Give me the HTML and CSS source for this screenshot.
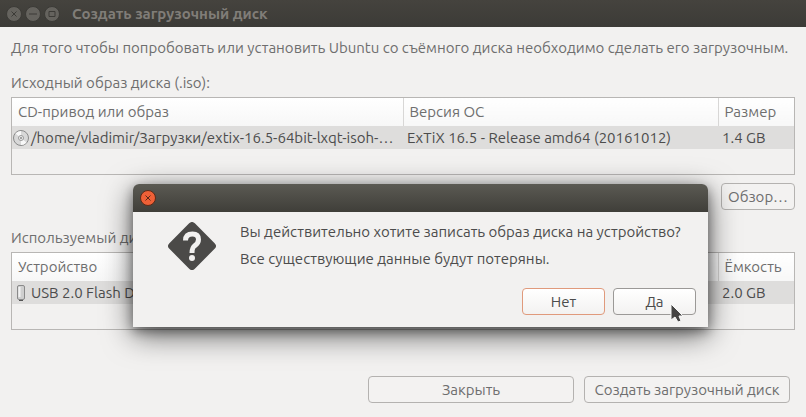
FILE: index.html
```html
<!DOCTYPE html>
<html lang="ru">
<head>
    <meta charset="UTF-8">
    <meta name="viewport" content="width=device-width, initial-scale=1.0">
    <title>Создать загрузочный диск</title>
    <link rel="stylesheet" href="styles.css">
</head>
<body>

    <header class="titlebar">
        <button type="button" class="win-btn" aria-label="Закрыть окно">
            <svg viewBox="0 0 16 16"><circle cx="8" cy="8" r="7.5"/><path d="M5.5 5.5l5 5M10.5 5.5l-5 5"/></svg>
        </button>
        <button type="button" class="win-btn" aria-label="Свернуть">
            <svg viewBox="0 0 16 16"><circle cx="8" cy="8" r="7.5"/><path d="M4 8h8"/></svg>
        </button>
        <button type="button" class="win-btn" aria-label="Развернуть">
            <svg viewBox="0 0 16 16"><circle cx="8" cy="8" r="7.5"/><path d="M5 5.5h6v5h-6z"/></svg>
        </button>
        <h1>Создать загрузочный диск</h1>
    </header>

    <main class="content">
        <p class="intro">Для того чтобы попробовать или установить Ubuntu со съёмного диска необходимо сделать его загрузочным.</p>

        <h2>Исходный образ диска (.iso):</h2>
        <div class="list">
            <table>
                <colgroup><col class="col-name"><col><col class="col-size"></colgroup>
                <thead>
                    <tr><th>CD-привод или образ</th><th>Версия ОС</th><th>Размер</th></tr>
                </thead>
                <tbody>
                    <tr>
                        <td>
                            <div class="item">
                                <svg class="icon" viewBox="0 0 18 18">
                                    <circle cx="9" cy="9" r="7.5" fill="#d8d8d8" stroke="#8a8a8a"/>
                                    <path d="M9 9L3.5 4.5A7 7 0 0 1 9 2zM9 9l5.5 4.5A7 7 0 0 1 9 16z" fill="#f8f8f8"/>
                                    <circle cx="9" cy="9" r="2.5" fill="#eee" stroke="#999"/>
                                    <circle cx="9" cy="9" r="1" fill="#888"/>
                                </svg>
                                <span>/home/vladimir/Загрузки/extix-16.5-64bit-lxqt-isoh-…</span>
                            </div>
                        </td>
                        <td>ExTiX 16.5 - Release amd64 (20161012)</td>
                        <td>1.4 GB</td>
                    </tr>
                </tbody>
            </table>
        </div>
        <div class="browse">
            <button type="button" class="btn">Обзор…</button>
        </div>

        <h2>Используемый диск:</h2>
        <div class="list">
            <table>
                <colgroup><col class="col-name"><col><col class="col-size"></colgroup>
                <thead>
                    <tr><th>Устройство</th><th></th><th>Ёмкость</th></tr>
                </thead>
                <tbody>
                    <tr>
                        <td>
                            <div class="item">
                                <svg class="icon" viewBox="0 0 18 18">
                                    <rect x="5.5" y="1.5" width="7" height="14" rx="1.5" fill="#cfcfcf" stroke="#8a8a8a"/>
                                    <path d="M7.5 3v10" stroke="#f2f2f2" stroke-width="2"/>
                                    <path d="M7 16.5h4" stroke="#555"/>
                                </svg>
                                <span>USB 2.0 Flash Disk</span>
                            </div>
                        </td>
                        <td></td>
                        <td>2.0 GB</td>
                    </tr>
                </tbody>
            </table>
        </div>

        <footer class="actions">
            <button type="button" class="btn">Закрыть</button>
            <button type="button" class="btn">Создать загрузочный диск</button>
        </footer>
    </main>

    <div class="dialog" role="dialog" aria-labelledby="question">
        <div class="dialog-bar">
            <button type="button" class="win-btn close" aria-label="Закрыть диалог">
                <svg viewBox="0 0 16 16"><circle cx="8" cy="8" r="7.5"/><path d="M5.5 5.5l5 5M10.5 5.5l-5 5"/></svg>
            </button>
        </div>
        <div class="dialog-body">
            <svg class="question-icon" viewBox="0 0 48 48">
                <rect x="6" y="6" width="36" height="36" rx="4" transform="rotate(45 24 24)" fill="#4b4a48"/>
                <path d="M17.5 18.5C17.5 14 20 12 24.5 12c4 0 6 2 6 5.500 0 3-1.500 4.500-3.500 6-2 1.500-3 2.500-3 7.500" fill="none" stroke="#f2f1f0" stroke-width="5"/>
                <circle cx="24" cy="36" r="3" fill="#f2f1f0"/>
            </svg>
            <div class="message">
                <p id="question">Вы действительно хотите записать образ диска на устройство?</p>
                <p>Все существующие данные будут потеряны.</p>
            </div>
        </div>
        <div class="dialog-actions">
            <button type="button" class="btn focused">Нет</button>
            <button type="button" class="btn">Да</button>
        </div>
        <svg class="cursor" viewBox="0 0 14 20">
            <path d="M1 1v16l4-3 3 5 3-1-2-5h4z" fill="#454443" stroke="#f7f7f7"/>
        </svg>
    </div>

</body>
</html>
```
FILE: styles.css
```css
* {
    box-sizing: border-box;
}
body {
    margin: 0;
    min-height: 100vh;
    background: #f2f1f0;
    color: #4c4c4c;
    font-family: Ubuntu, "Noto Sans", sans-serif;
    font-size: 15px;
    line-height: 20px;
}
h1, h2, p {
    margin: 0;
    font-size: 15px;
    white-space: nowrap;
}
svg {
    display: block;
}
.titlebar {
    display: flex;
    align-items: center;
    gap: 3px;
    height: 27px;
    padding: 0 6px;
    background: linear-gradient(#45433e, #3c3b37);
    color: #807d78;
}
.titlebar h1 {
    margin-left: 9px;
}
.win-btn {
    width: 16px;
    height: 16px;
    padding: 0;
    border: none;
    background: none;
}
.win-btn svg {
    width: 16px;
    height: 16px;
    fill: #65635e;
    stroke: #3c3b37;
}
.win-btn.close svg {
    fill: #ee6037;
    stroke: #5b2a18;
}
.content {
    padding: 11px 11px 14px;
    color: #6e6e6e;
}
.intro {
    margin-bottom: 15px;
}
h2 {
    font-weight: normal;
    margin-bottom: 4px;
}
.list {
    min-height: 78px;
    border: 1px solid #b8b6b4;
}
table {
    width: 100%;
    table-layout: fixed;
    border-collapse: collapse;
}
.col-name {
    width: 50%;
}
.col-size {
    width: 76px;
}
th {
    height: 28px;
    padding: 0 6px;
    background: linear-gradient(#fff, #f7f7f7);
    border-left: 1px solid #d8d7d6;
    font-weight: normal;
    text-align: left;
}
th:first-child {
    border-left: none;
}
td {
    height: 23px;
    padding: 0 4px;
    background: #dedddc;
    color: #4c4c4c;
    white-space: nowrap;
}
td:first-child {
    padding: 0;
}
.item {
    display: flex;
    align-items: center;
    gap: 1px;
    overflow: hidden;
}
.icon {
    flex: none;
    width: 18px;
    height: 18px;
}
.browse {
    display: flex;
    justify-content: flex-end;
    margin: 8px 0 18px;
}
.btn {
    height: 27px;
    padding: 0 5px;
    border: 1px solid #b4b2b0;
    border-radius: 4px;
    background: #f3f2f1;
    color: inherit;
    font: inherit;
    white-space: nowrap;
}
.browse .btn {
    min-width: 74px;
}
.actions {
    display: flex;
    justify-content: flex-end;
    gap: 10px;
    margin-top: 46px;
    padding-right: 5px;
}
.actions .btn {
    width: 206px;
}
.dialog {
    position: absolute;
    top: 184px;
    left: 133px;
    width: 575px;
    background: #f2f1f0;
    border-radius: 6px 6px 0 0;
    box-shadow: 0 8px 30px rgba(0, 0, 0, 0.6), 0 4px 12px rgba(0, 0, 0, 0.4);
}
.dialog-bar {
    display: flex;
    align-items: center;
    height: 28px;
    padding: 0 7px;
    background: linear-gradient(#5b5a53, #3f3e39);
    border-radius: 6px 6px 0 0;
}
.dialog-body {
    display: flex;
    gap: 24px;
    padding: 10px 0 0 35px;
}
.question-icon {
    flex: none;
    width: 48px;
    height: 48px;
}
.message {
    display: grid;
    gap: 6px;
}
.dialog-actions {
    display: flex;
    justify-content: flex-end;
    gap: 8px;
    padding: 18px 12px 12px;
}
.dialog-actions .btn {
    width: 83px;
    background: linear-gradient(#fff, #f3f2f1);
    border-color: #9b9997;
}
.dialog-actions .btn.focused {
    border-color: #e09a7c;
}
.cursor {
    position: absolute;
    right: 24px;
    bottom: 4px;
    width: 14px;
    height: 20px;
}
```
